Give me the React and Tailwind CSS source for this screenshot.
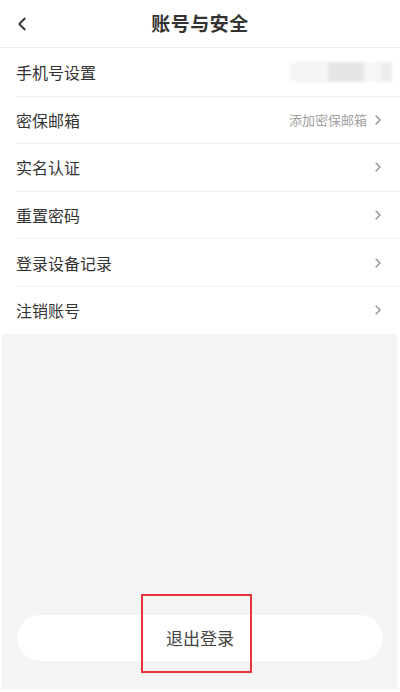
import { ChevronLeft, ChevronRight } from 'lucide-react';

const rows = [
  { label: '手机号设置', phone: true },
  { label: '密保邮箱', hint: '添加密保邮箱' },
  { label: '实名认证' },
  { label: '重置密码' },
  { label: '登录设备记录' },
  { label: '注销账号' },
];

function BlurredPhone() {
  return (
    <div className="flex h-[20px] blur-[1.5px]">
      <div className="w-[38px] bg-[#f5f5f5]" />
      <div className="w-[36px] bg-[#e6e6e6]" />
      <div className="w-[18px] bg-[#f6f6f6]" />
      <div className="w-[10px] bg-[#ececec]" />
    </div>
  );
}

export default function App() {
  return (
    <div className="w-[400px] h-[692px] bg-white flex flex-col font-['Noto_Sans_CJK_SC','Noto_Sans',sans-serif] text-[#333]">
      <header className="relative h-12 shrink-0 flex items-center justify-center border-b border-[#ededed]">
        <button className="absolute left-[11px] top-[13px] text-[#333]">
          <ChevronLeft size={22} strokeWidth={2} />
        </button>
        <h1 className="text-[19px] font-bold tracking-[0.5px] text-[#333] -mt-[1px]">账号与安全</h1>
      </header>

      <div className="shrink-0">
        {rows.map((r, i) => (
          <div key={r.label} className="pl-4">
            <div className={`h-[47.6px] flex items-center pr-[14px] ${i > 0 ? 'border-t border-[#efefef]' : ''}`}>
              <span className="text-[16px] text-[#333] flex-1">{r.label}</span>
              {r.phone ? (
                <div className="mr-[-6px]"><BlurredPhone /></div>
              ) : (
                <div className="flex items-center gap-[3px]">
                  {r.hint && <span className="text-[13px] text-[#a0a0a0]">{r.hint}</span>}
                  <ChevronRight size={16} strokeWidth={1.75} className="text-[#8a8a8a]" />
                </div>
              )}
            </div>
          </div>
        ))}
      </div>

      <div className="flex-1 flex pl-[2px] pr-[3px] pb-[3px]">
        <div className="flex-1 bg-[#f4f4f4] flex flex-col justify-end pl-[15px] pr-[14px] pb-[28px]">
          <div className="relative">
            <button className="w-full h-[46px] rounded-full bg-white text-[17px] text-[#444] flex items-center justify-center">
              退出登录
            </button>
            <div className="absolute left-[124px] top-[-21px] w-[111px] h-[79px] border-2 border-[#e8353d] pointer-events-none" />
          </div>
        </div>
      </div>
    </div>
  );
}
